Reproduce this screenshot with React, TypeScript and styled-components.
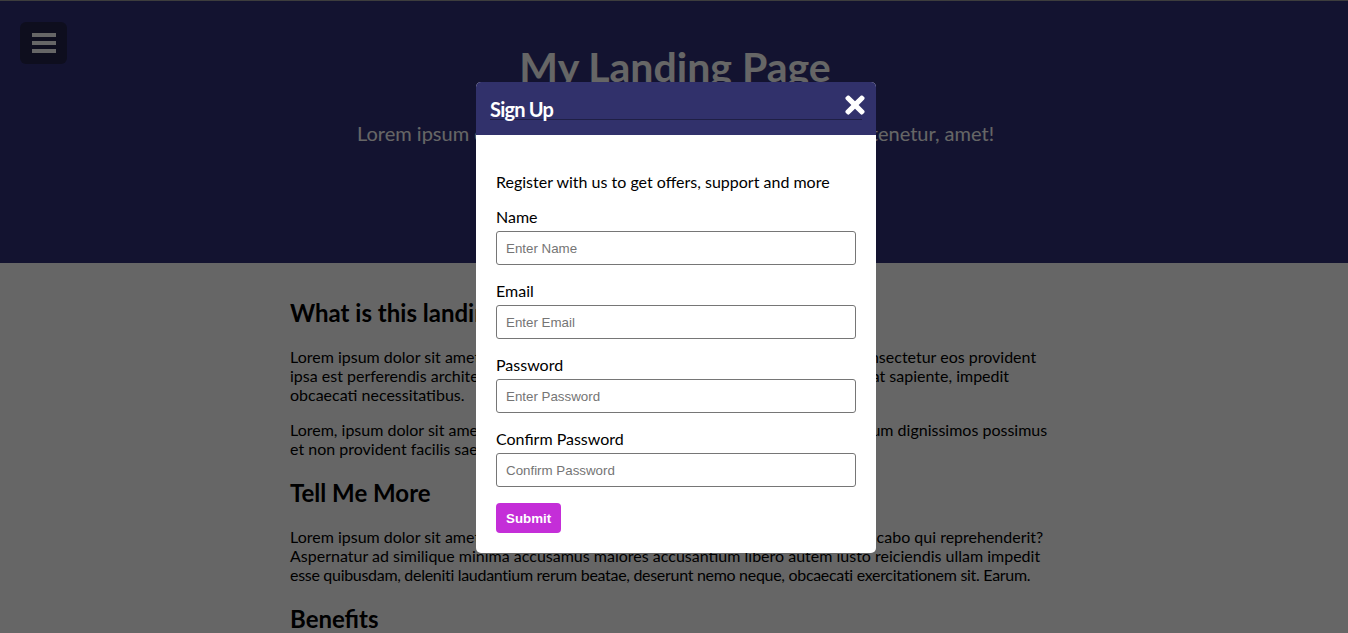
import React from "react";
import styled, { createGlobalStyle } from "styled-components";
import { FaTimes } from "react-icons/fa";

const GlobalStyle = createGlobalStyle`
  * { box-sizing: border-box; }
  html, body { margin: 0; padding: 0; }
  body {
    font-family: "Lato", "Open Sans", sans-serif;
    background: #ffffff;
    color: #000;
    overflow: hidden;
  }
`;

const Header = styled.header`
  position: relative;
  height: 263px;
  border-top: 1px solid #9a9a9a;
  background: #303078;
  display: flex;
  flex-direction: column;
  align-items: center;
  padding-top: 42px;
  color: #ffffff;
`;

const MenuToggle = styled.button`
  position: absolute;
  top: 21px;
  left: 20px;
  width: 47px;
  height: 42px;
  border: none;
  border-radius: 6px;
  background: #23234b;
  display: flex;
  align-items: center;
  justify-content: center;
  padding: 0;
  cursor: pointer;
`;

const Title = styled.h1`
  margin: 0;
  font-size: 41px;
  line-height: 48px;
  font-weight: 700;
  color: #ffffff;
  margin-left: 2px;
`;

const Subtitle = styled.p`
  margin: 30px 0 0;
  font-size: 20px;
  line-height: 24px;
  color: #ffffff;
  margin-left: 3px;
`;

const Main = styled.main`
  max-width: 768px;
  margin: 0 auto;
  padding: 15px 0;
`;

const SectionTitle = styled.h2`
  font-size: 24px;
  line-height: 29px;
  font-weight: 700;
  margin: 20px 0;
`;

const Text = styled.p`
  font-size: 16px;
  line-height: 19px;
  margin: 16px 0;
`;

const TightLine = styled.span`
  letter-spacing: -0.3px;
  white-space: nowrap;
`;

const Overlay = styled.div`
  position: fixed;
  inset: 0;
  background: rgba(0, 0, 0, 0.6);
`;

const Modal = styled.div`
  position: fixed;
  top: 82px;
  left: 476px;
  width: 400px;
  background: #ffffff;
  border-radius: 5px;
  overflow: hidden;
`;

const ModalHeader = styled.div`
  background: #31316b;
  padding: 8px 14px 14px;
  height: 53px;
`;

const ModalHeaderRow = styled.div`
  display: flex;
  align-items: flex-end;
  justify-content: space-between;
  height: 30px;
  border-bottom: 1px solid rgba(0, 0, 0, 0.35);
`;

const ModalTitle = styled.h2`
  margin: 0 0 -2px;
  font-size: 20px;
  line-height: 24px;
  font-weight: 700;
  color: #ffffff;
  letter-spacing: -0.8px;
`;

const CloseButton = styled.button`
  border: none;
  background: none;
  color: #ffffff;
  padding: 0;
  margin: 0 -7px 0 0;
  display: flex;
  cursor: pointer;
`;

const ModalBody = styled.div`
  padding: 21px 20px 20px;
`;

const Intro = styled.p`
  margin: 16px 0;
  font-size: 16px;
  line-height: 19px;
`;

const Field = styled.div`
  display: flex;
  flex-direction: column;
  margin-bottom: 16px;
`;

const Label = styled.label`
  font-size: 16px;
  line-height: 19px;
  margin-bottom: 5px;
`;

const Input = styled.input`
  width: 360px;
  height: 34px;
  border: 1px solid #767676;
  border-radius: 3px;
  padding: 0 9px;
  font-family: "Liberation Sans", Arial, sans-serif;
  font-size: 13.33px;
  color: #000;
  &::placeholder {
    color: #757575;
  }
`;

const SubmitButton = styled.button`
  height: 30px;
  padding: 0 10px;
  border: none;
  border-radius: 4px;
  background: #c42ed8;
  color: #ffffff;
  font-family: "Liberation Sans", Arial, sans-serif;
  font-size: 13.33px;
  font-weight: 700;
  cursor: pointer;
`;

const fields = [
  { id: "name", label: "Name", placeholder: "Enter Name", type: "text" },
  { id: "email", label: "Email", placeholder: "Enter Email", type: "email" },
  { id: "password", label: "Password", placeholder: "Enter Password", type: "password" },
  { id: "confirm", label: "Confirm Password", placeholder: "Confirm Password", type: "password" },
];

export default function App() {
  return (
    <>
      <GlobalStyle />
      <Header>
        <MenuToggle aria-label="Menu">
          <svg width="24" height="20" viewBox="0 0 24 20">
            <rect x="0" y="0" width="24" height="4" fill="#ffffff" />
            <rect x="0" y="8" width="24" height="4" fill="#ffffff" />
            <rect x="0" y="16" width="24" height="4" fill="#ffffff" />
          </svg>
        </MenuToggle>
        <Title>My Landing Page</Title>
        <Subtitle>Lorem ipsum dolor sit amet consectetur adipisicing elit. Ad tenetur, amet!</Subtitle>
      </Header>
      <Main>
        <SectionTitle>What is this landing page?</SectionTitle>
        <Text>
          Lorem ipsum dolor sit amet consectetur adipisicing elit. Nihil, voluptas nemo? Eu consectetur eos provident
          <br />
          ipsa est perferendis architecto quas dolores voluptatem, nostrum quidem, nulla fugiat sapiente, impedit
          <br />
          obcaecati necessitatibus.
        </Text>
        <Text>
          Lorem, ipsum dolor sit amet consectetur adipisicing elit. Quas, quo voluptatibus. Ipsum dignissimos possimus
          <br />
          et non provident facilis saepe, ab ullam.
        </Text>
        <SectionTitle>Tell Me More</SectionTitle>
        <Text>
          Lorem ipsum dolor sit amet consectetur adipisicing elit. Illum quis, architecto in explicabo qui reprehenderit?
          <br />
          Aspernatur ad similique minima accusamus maiores accusantium libero autem iusto reiciendis ullam impedit
          <br />
          <TightLine>
            esse quibusdam, deleniti laudantium rerum beatae, deserunt nemo neque, obcaecati exercitationem sit. Earum.
          </TightLine>
        </Text>
        <SectionTitle>Benefits</SectionTitle>
        <Text>
          Lorem ipsum dolor sit amet consectetur adipisicing elit. Delectus, molestias. Nesciunt voluptatibus.
        </Text>
      </Main>
      <Overlay />
      <Modal>
        <ModalHeader>
          <ModalHeaderRow>
            <ModalTitle>Sign Up</ModalTitle>
            <CloseButton aria-label="Close">
              <FaTimes size={28} />
            </CloseButton>
          </ModalHeaderRow>
        </ModalHeader>
        <ModalBody>
          <Intro>Register with us to get offers, support and more</Intro>
          <form onSubmit={(e) => e.preventDefault()}>
            {fields.map((f) => (
              <Field key={f.id}>
                <Label htmlFor={f.id}>{f.label}</Label>
                <Input id={f.id} type={f.type} placeholder={f.placeholder} />
              </Field>
            ))}
            <SubmitButton type="submit">Submit</SubmitButton>
          </form>
        </ModalBody>
      </Modal>
    </>
  );
}
